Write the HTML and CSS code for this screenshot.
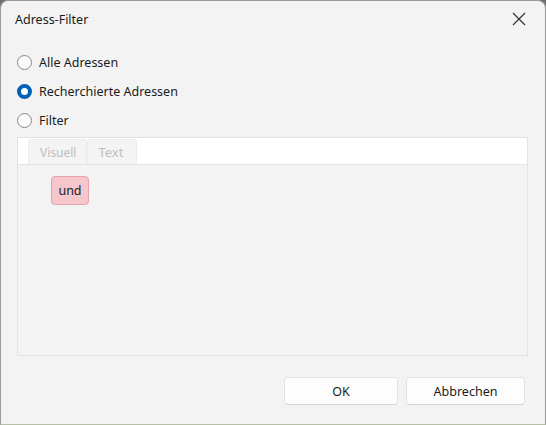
FILE: index.html
```html
<!DOCTYPE html>
<html lang="de">
<head>
    <meta charset="UTF-8">
    <title>Adress-Filter</title>
    <link rel="stylesheet" href="styles.css">
</head>
<body>
    <div class="window">
        <div class="titlebar">
            <span class="title">Adress-Filter</span>
            <button class="close" aria-label="Schließen">
                <svg width="14" height="14" viewBox="0 0 14 14">
                    <path d="M1 1 L13 13 M13 1 L1 13" stroke="#333" stroke-width="1.2" fill="none"/>
                </svg>
            </button>
        </div>
        <div class="content">
            <label class="radio-row"><span class="radio"></span>Alle Adressen</label>
            <label class="radio-row"><span class="radio checked"></span>Recherchierte Adressen</label>
            <label class="radio-row"><span class="radio"></span>Filter</label>

            <div class="panel">
                <div class="tabs">
                    <div class="tab active">Visuell</div>
                    <div class="tab">Text</div>
                </div>
                <div class="panel-body">
                    <span class="chip">und</span>
                </div>
            </div>
        </div>
        <div class="footer">
            <button class="btn ok">OK</button>
            <button class="btn cancel">Abbrechen</button>
        </div>
    </div>
</body>
</html>
```

FILE: styles.css
```css
body {
    margin: 0;
    padding: 0;
    background: #6d6d6d;
    font-family: 'Noto Sans', 'Open Sans', sans-serif;
    font-size: 12px;
    color: #1b1b1b;
}
.window {
    width: 546px;
    height: 425px;
    box-sizing: border-box;
    background: #f3f3f3;
    border: 1px solid #9a9a9a;
    border-bottom-color: #b7bfa6;
    border-radius: 8px 8px 0 0;
    display: flex;
    flex-direction: column;
}
.titlebar {
    height: 36px;
    display: flex;
    align-items: center;
    justify-content: space-between;
    padding: 0 0 0 14px;
}
.title {
    font-size: 12.5px;
    color: #1b1b1b;
}
.close {
    width: 46px;
    height: 36px;
    border: none;
    background: transparent;
    display: flex;
    align-items: center;
    justify-content: center;
    padding: 0;
    margin-right: 3px;
}
.content {
    padding: 11px 0 0 16px;
    flex: 1;
}
.radio-row {
    display: flex;
    align-items: center;
    height: 29px;
    font-size: 12.5px;
}
.radio {
    width: 15px;
    height: 15px;
    border: 1px solid #8a8a8a;
    border-radius: 50%;
    background: #fbfbfb;
    margin-right: 7px;
    box-sizing: border-box;
}
.radio.checked {
    border: 4.5px solid #005fb8;
    background: #fff;
}
.panel {
    margin-top: 2px;
    width: 511px;
    height: 219px;
    box-sizing: border-box;
    border: 1px solid #e2e2e2;
    display: flex;
    flex-direction: column;
}
.tabs {
    height: 26px;
    background: #fff;
    border-bottom: 1px solid #e4e4e4;
    display: flex;
    align-items: flex-end;
    padding-left: 10px;
}
.tab {
    height: 25px;
    box-sizing: border-box;
    display: flex;
    align-items: center;
    background: #f4f4f4;
    border: 1px solid #ededed;
    border-bottom: none;
    border-radius: 3px 3px 0 0;
    color: #c0c0c0;
}
.tab.active {
    padding: 0 10px 0 11px;
    font-size: 12px;
    color: #bdbdbd;
}
.tab:not(.active) {
    padding: 0 13px 0 10px;
    font-size: 13px;
}
.panel-body {
    flex: 1;
    background: #f3f3f3;
    padding: 11px 0 0 33px;
}
.chip {
    display: inline-flex;
    align-items: center;
    justify-content: center;
    width: 38px;
    height: 29px;
    box-sizing: border-box;
    background: #f5c6cb;
    border: 1px solid #e7a2ab;
    border-radius: 4px;
    font-size: 12.5px;
    color: #222;
}
.footer {
    display: flex;
    justify-content: flex-end;
    gap: 8px;
    padding: 0 20px 19px 0;
}
.btn {
    height: 28px;
    box-sizing: border-box;
    background: #fdfdfd;
    border: 1px solid #e3e3e3;
    border-bottom-color: #d4d4d4;
    border-radius: 4px;
    font-family: inherit;
    font-size: 12.5px;
    color: #1b1b1b;
}
.ok {
    width: 114px;
}
.cancel {
    width: 119px;
}
```
